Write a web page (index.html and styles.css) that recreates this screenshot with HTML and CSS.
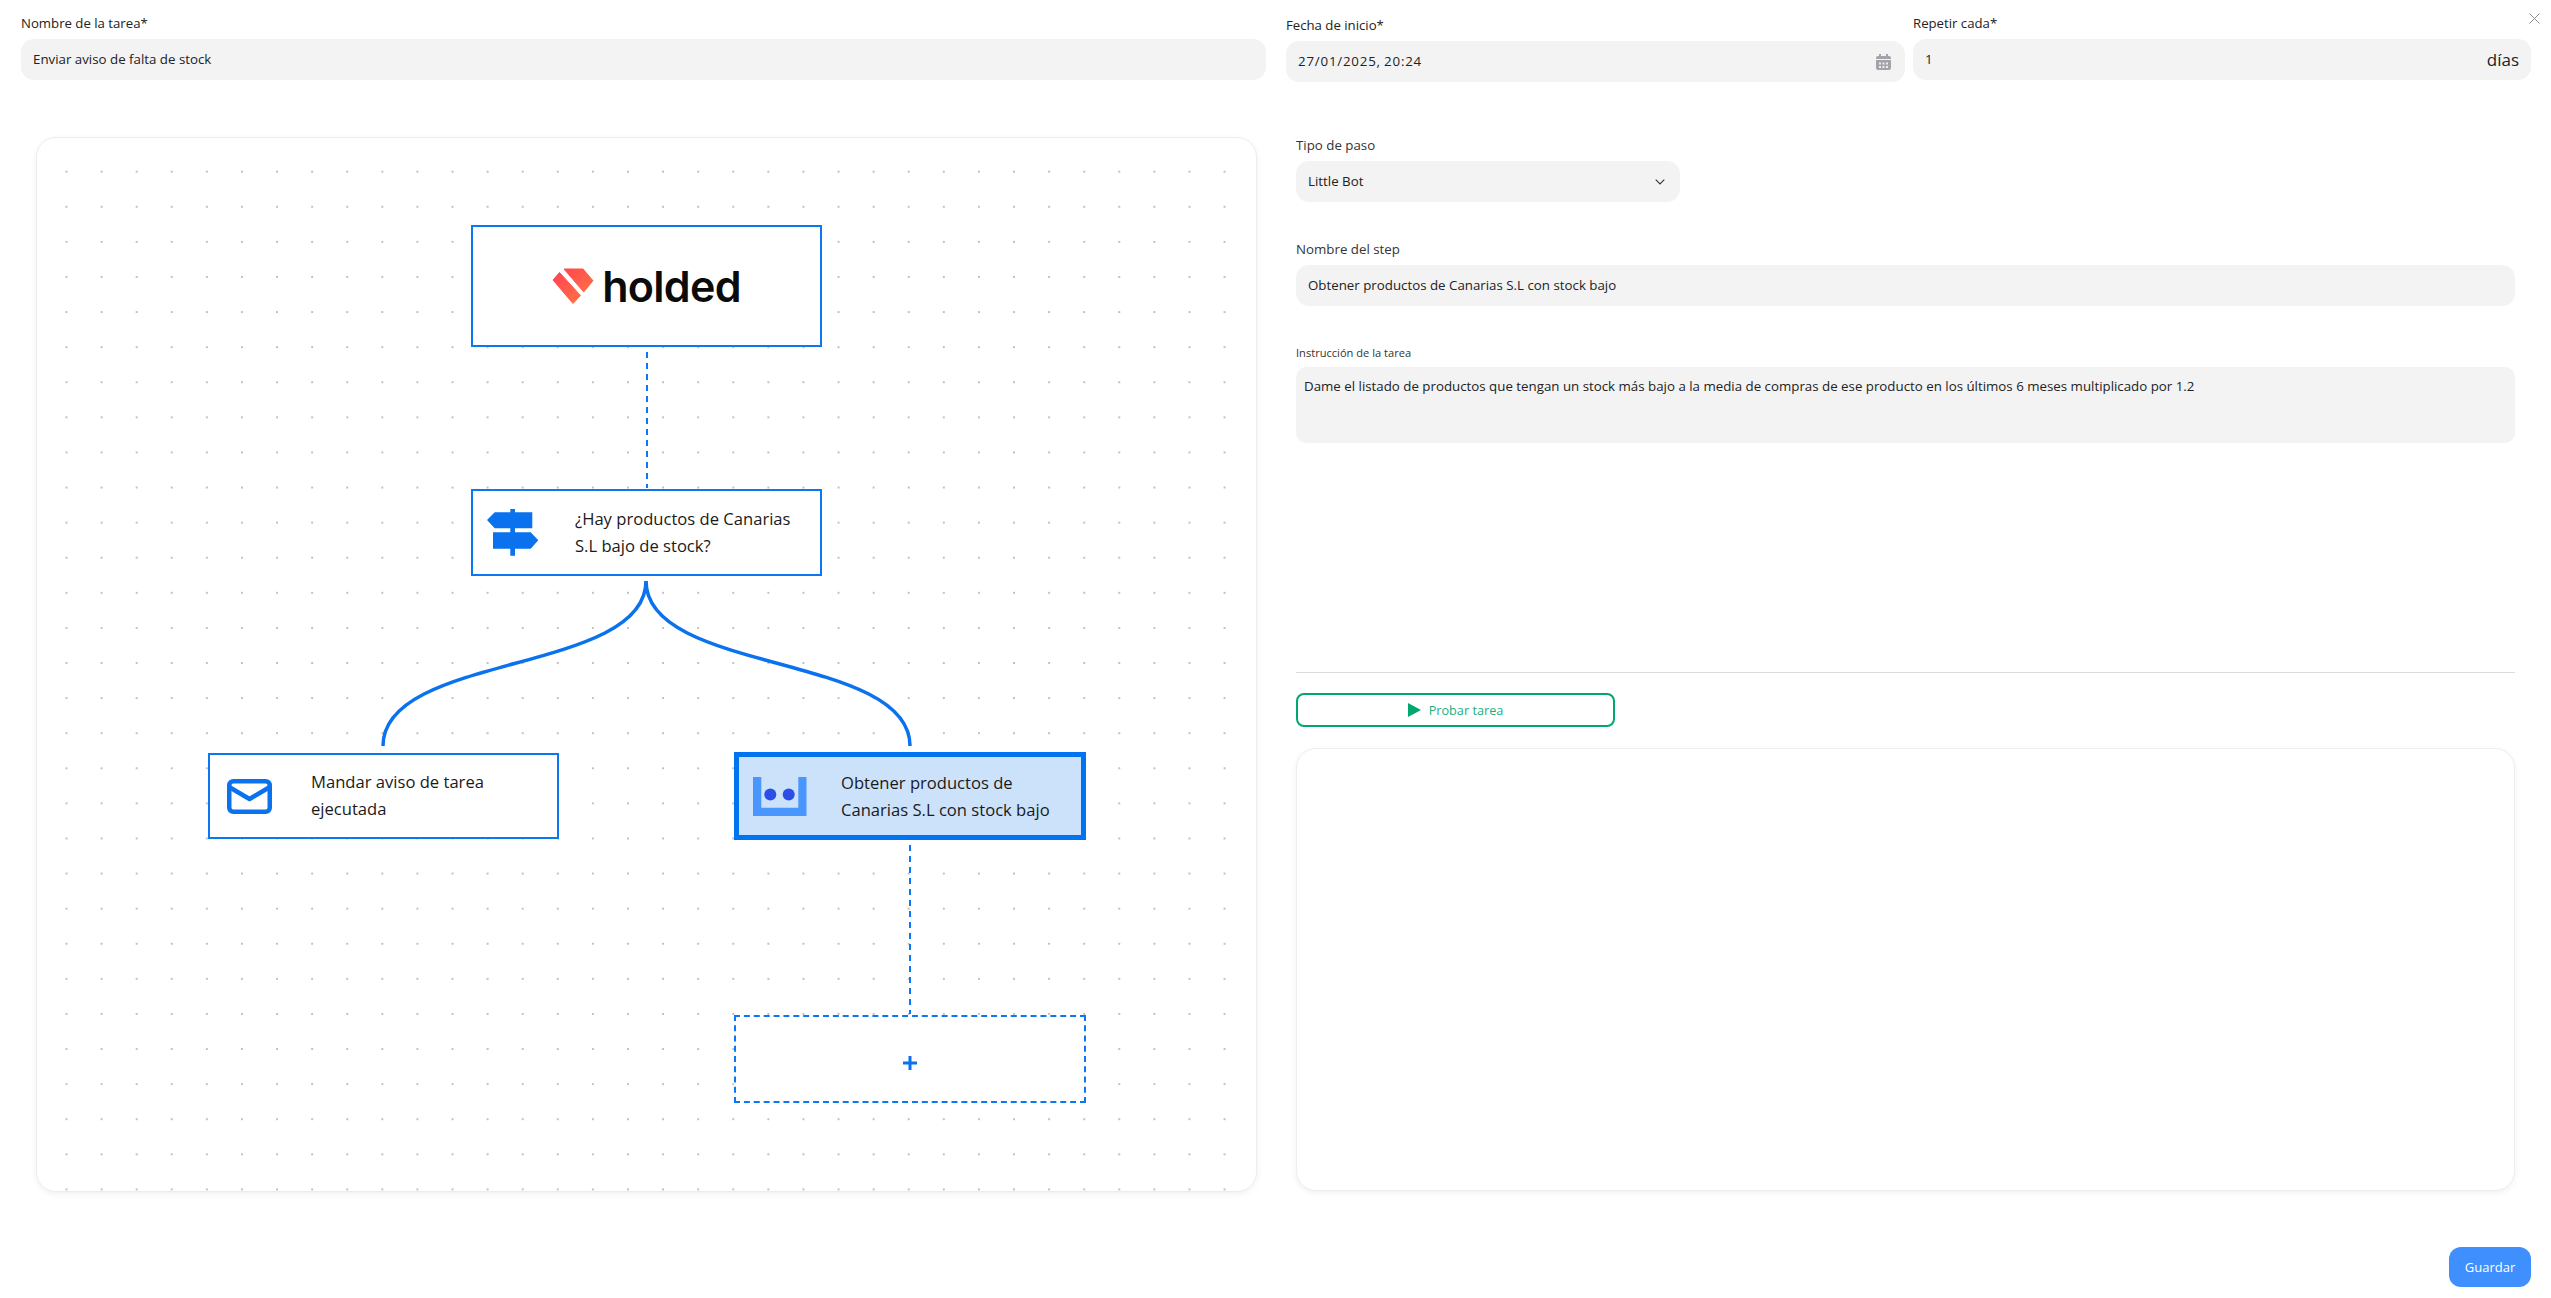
FILE: index.html
```html
<!DOCTYPE html>
<html lang="es">
<head>
<meta charset="utf-8">
<title>Tarea</title>
<link rel="stylesheet" href="styles.css">
</head>
<body>
<div class="page">
  <button class="close" aria-label="Cerrar">
    <svg width="11" height="11" viewBox="0 0 11 11"><path d="M.5.5l10 10M10.500.5l-10 10" stroke="#8a8a8a" fill="none"/></svg>
  </button>
  <header class="top-row">
    <div class="field field-name">
      <div class="label-strong">Nombre de la tarea*</div>
      <div class="box">Enviar aviso de falta de stock</div>
    </div>
    <div class="field field-date">
      <div class="label-strong">Fecha de inicio*</div>
      <div class="box box-between">
        <span class="date-text">27/01/2025, 20:24</span>
        <svg class="cal" width="15" height="16" viewBox="0 0 15 16"><path d="M3 0h2v2h5V0h2v2h1a2 2 0 0 1 2 2v1H0V4a2 2 0 0 1 2-2h1zM0 6h15v8a2 2 0 0 1-2 2H2a2 2 0 0 1-2-2z" fill="#a3a3ab"/><path d="M3 8.500h2v2H3zM6.500 8.500h2v2h-2zM10 8.500h2v2h-2zM3 12h2v2H3zM6.500 12h2v2h-2zM10 12h2v2h-2z" fill="#ededee"/></svg>
      </div>
    </div>
    <div class="field field-repeat">
      <div class="label-strong">Repetir cada*</div>
      <div class="box box-between">
        <span>1</span>
        <span class="unit">días</span>
      </div>
    </div>
  </header>

  <main class="main">
    <section class="canvas">
      <svg class="wires" width="1219" height="1053" viewBox="0 0 1219 1053" fill="none">
        <path class="wire-dash" d="M610 214V350"/>
        <path class="wire" d="M609 443C609 536 346 515 346 608"/>
        <path class="wire" d="M609 443C609 536 873 515 873 608"/>
        <path class="wire-dash" d="M873 707V876"/>
      </svg>

      <div class="node node-holded">
        <svg width="42" height="37" viewBox="0 0 42 37">
          <defs>
            <linearGradient id="hg" x1="0" y1="0" x2="1" y2="1">
              <stop offset="0" stop-color="#ff3f52"/>
              <stop offset="1" stop-color="#ff7a42"/>
            </linearGradient>
          </defs>
          <path d="M1 12L7.500 4.500L28.500 27.500L21 35.500ZM12 1H31L41 12.700L31.700 24Z" fill="url(#hg)" stroke="url(#hg)" stroke-width="1" stroke-linejoin="round"/>
        </svg>
        <span class="holded-word">holded</span>
      </div>

      <div class="node node-decision">
        <div class="node-icon icon-sign">
          <svg width="52" height="47" viewBox="0 0 52 47" fill="#0a72ee">
            <path d="M23.300 0H28V3.300H45.300V19.300H28V23.300H43.700L51.300 31.300L43.700 39.700H28V46.700H23.300V39.700H6V23.300H23.300V19.300H7.700L0 11L7.700 3.300H23.300Z"/>
          </svg>
        </div>
        <div class="node-text text-up">¿Hay productos de Canarias<br>S.L bajo de stock?</div>
      </div>

      <div class="node node-mail">
        <div class="node-icon icon-mail">
          <svg width="45" height="35" viewBox="0 0 45 35" fill="none" stroke="#0a72ee" stroke-width="4.500" stroke-linejoin="round">
            <rect x="2.250" y="2.250" width="40.500" height="30.500" rx="4"/>
            <path d="M3 8.500L22.500 20L42 8.500"/>
          </svg>
        </div>
        <div class="node-text text-up">Mandar aviso de tarea<br>ejecutada</div>
      </div>

      <div class="node node-bot">
        <div class="node-icon icon-bot">
          <svg width="54" height="39" viewBox="0 0 54 39">
            <path d="M0 0H8.300V30.700H45.300V0H53.500V39H0Z" fill="#4a96ff"/>
            <circle cx="17.300" cy="17.500" r="6" fill="#2b4fe6"/>
            <circle cx="35.700" cy="17.500" r="6" fill="#2b4fe6"/>
          </svg>
        </div>
        <div class="node-text">Obtener productos de<br>Canarias S.L con stock bajo</div>
      </div>

      <div class="node node-add">
        <svg width="14" height="14" viewBox="0 0 14 14"><path d="M0 7h14M7 0v14" stroke="#0a72ee" stroke-width="3"/></svg>
      </div>
    </section>

    <section class="side">
      <div class="label">Tipo de paso</div>
      <div class="box box-between box-select">
        <span>Little Bot</span>
        <svg width="10" height="6" viewBox="0 0 10 6"><path d="M.7.7L5 5L9.300.7" fill="none" stroke="#333" stroke-width="1.100"/></svg>
      </div>
      <div class="label label-step">Nombre del step</div>
      <div class="box">Obtener productos de Canarias S.L con stock bajo</div>
      <div class="label-small">Instrucción de la tarea</div>
      <div class="textarea">Dame el listado de productos que tengan un stock más bajo a la media de compras de ese producto en los últimos 6 meses multiplicado por 1.2</div>
      <hr class="divider">
      <button class="test-btn">
        <svg width="13" height="14" viewBox="0 0 13 14"><path d="M0 0L13 7L0 14Z" fill="#00a870"/></svg>
        <span>Probar tarea</span>
      </button>
      <div class="output"></div>
    </section>
  </main>

  <footer class="footer">
    <button class="save">Guardar</button>
  </footer>
</div>
</body>
</html>
```
FILE: styles.css
```css
* { box-sizing: border-box; }
html, body { margin: 0; padding: 0; background: #fff; }
body {
  font-family: "Open Sans", "Noto Sans", "Liberation Sans", sans-serif;
  font-size: 13.3px;
  color: #222;
}
.page { position: relative; width: 2551px; height: 1298px; overflow: hidden; }

.close {
  position: absolute; right: 11px; top: 13px;
  width: 11px; height: 11px; padding: 0; border: 0; background: none; line-height: 0;
}

.top-row { display: flex; padding: 14px 20px 0 21px; height: 137px; }
.field-name { width: 1245px; margin-right: 20px; }
.field-date { width: 619px; margin-right: 8px; padding-top: 2px; }
.field-repeat { width: 618px; }

.label-strong { height: 25px; padding-top: 1px; line-height: 16px; font-size: 13.2px; font-weight: 500; color: #222; }
.box {
  height: 41px; line-height: 41px; padding: 0 12px;
  background: #f3f3f3; border-radius: 13px; color: #222;
}
.box-between { display: flex; align-items: center; justify-content: space-between; }
.date-text { word-spacing: -1px; letter-spacing: .8px; }
.unit { font-size: 17px; font-weight: 500; color: #222; }
.cal { margin-right: 2px; }

.main { display: flex; padding-left: 36px; height: 1055px; }
.canvas {
  position: relative; flex: none; width: 1221px; height: 1055px;
  border: 1px solid #ededed; border-radius: 20px;
  box-shadow: 0 2px 6px rgba(0,0,0,.06);
  background-color: #fff;
  background-image: radial-gradient(circle, #c0c0c0 1px, transparent 1.3px);
  background-size: 35.1px 35.1px;
  background-position: 11.95px 16.15px;
}
.wires { position: absolute; left: 0; top: 0; }
.wire { stroke: #0a72ee; stroke-width: 3.5; }
.wire-dash { stroke: #0a78f5; stroke-width: 2; stroke-dasharray: 6 5; }

.node {
  position: absolute; display: flex; align-items: center;
  border: 2px solid #0a78f5; background: #fff;
}
.node-holded { left: 434px; top: 87px; width: 351px; height: 122px; justify-content: center; gap: 8px; }
.node-decision { left: 434px; top: 351px; width: 351px; height: 87px; }
.node-mail { left: 171px; top: 615px; width: 351px; height: 86px; }
.node-bot { left: 697px; top: 614px; width: 352px; height: 88px; border-width: 5px; border-color: #0073f0; background: #cce2fb; }
.node-add { left: 697px; top: 877px; width: 352px; height: 88px; border-style: dashed; justify-content: center; padding-top: 8px; }

.holded-word {
  font-family: Inter, "Noto Sans", sans-serif; font-size: 43px; font-weight: 600;
  letter-spacing: -.7px; line-height: 1; color: #0b0b0b;
}
.node-icon { flex: none; width: 102px; display: flex; align-items: center; }
.icon-sign { padding-left: 14px; }
.icon-mail { width: 101px; padding-left: 17px; }
.icon-bot { padding-left: 14px; }
.node-text { font-size: 16.6px; line-height: 27px; color: #1a1a1a; }
.text-up { padding-bottom: 2px; }

.side { flex: none; width: 1219px; margin-left: 39px; display: flex; flex-direction: column; }
.label { height: 24px; line-height: 16px; color: #333; }
.box-select { width: 384px; }
.box-select svg { margin-right: 3px; }
.label-step { margin-top: 39px; }
.label-small { height: 21px; margin-top: 40px; line-height: 14px; font-size: 11.1px; color: #333; }
.textarea {
  height: 76px; padding: 9px 8px; line-height: 20px;
  background: #f3f3f3; border-radius: 10px; color: #222;
}
.divider { width: 100%; height: 1px; margin: 229px 0 20px; border: 0; background: #dcdcdc; }
.test-btn {
  display: flex; align-items: center; justify-content: center; gap: 8px;
  width: 319px; height: 34px; padding: 0;
  border: 2px solid #00a870; border-radius: 8px; background: #fff;
  font: inherit; font-size: 12.7px; color: #1cb07f;
}
.output {
  flex: 1; margin-top: 21px; margin-bottom: 1px;
  border: 1px solid #eeeeee; border-radius: 20px;
  box-shadow: 0 2px 6px rgba(0,0,0,.06); background: #fff;
}

.footer { display: flex; justify-content: flex-end; padding: 55px 20px 0 0; }
.save {
  width: 82px; height: 40px; border: 0; border-radius: 12px;
  background: #408ffe; color: #fff; font: inherit; font-size: 13px;
}
```
